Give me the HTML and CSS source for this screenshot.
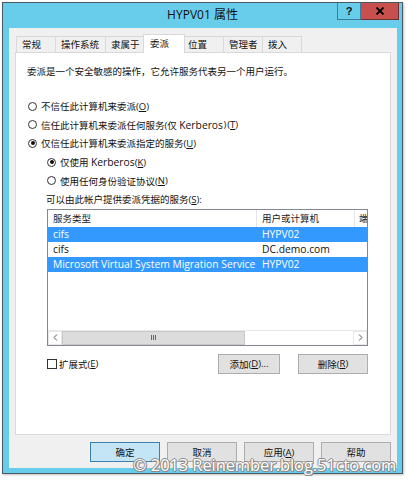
FILE: index.html
```html
<!DOCTYPE html>
<html lang="zh-CN">
<head>
<meta charset="utf-8">
<title>HYPV01 属性</title>
<link rel="stylesheet" href="styles.css">
</head>
<body>
<div class="window">
  <div class="titlebar">
    <div></div>
    <div class="title">HYPV01 属性</div>
    <div class="tbtns">
      <div class="tb help">?</div>
      <div class="tb close"><svg width="10" height="8" viewBox="0 0 10 8"><path d="M1.5 0.5 L8.5 7.5 M8.5 0.5 L1.5 7.5" stroke="#000" stroke-width="1.8" fill="none"/></svg></div>
    </div>
  </div>
  <div class="client">
    <div class="tabs">
      <div class="tab t1">常规</div>
      <div class="tab t2">操作系统</div>
      <div class="tab t3">隶属于</div>
      <div class="tab t4 active">委派</div>
      <div class="tab t5">位置</div>
      <div class="tab t6">管理者</div>
      <div class="tab t7">拨入</div>
    </div>
    <div class="panel">
      <div class="desc">委派是一个安全敏感的操作，它允许服务代表另一个用户运行。</div>
      <div class="options">
        <div class="opt"><span class="radio"></span>不信任此计算机来委派(<u>O</u>)</div>
        <div class="opt"><span class="radio"></span>信任此计算机来委派任何服务(仅 <span class="lat">Kerberos</span><span class="gap">)</span>(<u>T</u>)</div>
        <div class="opt"><span class="radio on"></span>仅信任此计算机来委派指定的服务(<u>U</u>)</div>
        <div class="opt sub"><span class="radio on"></span>仅使用 <span class="lat">Kerberos</span>(<u>K</u>)</div>
        <div class="opt sub"><span class="radio"></span>使用任何身份验证协议(<u>N</u>)</div>
        <div class="opt lbl">可以由此帐户提供委派凭据的服务(<u>S</u>):</div>
      </div>
      <div class="list">
        <div class="lrow head">
          <div class="c1">服务类型</div>
          <div class="c2">用户或计算机</div>
          <div class="c3">端口</div>
        </div>
        <div class="lrow data sel">
          <div class="c1">cifs</div>
          <div class="c2">HYPV02</div>
          <div class="c3"></div>
        </div>
        <div class="lrow data">
          <div class="c1">cifs</div>
          <div class="c2">DC.demo.com</div>
          <div class="c3"></div>
        </div>
        <div class="lrow data sel">
          <div class="c1">Microsoft Virtual System Migration Service</div>
          <div class="c2">HYPV02</div>
          <div class="c3"></div>
        </div>
        <div class="lspace"></div>
        <div class="hscroll">
          <div class="arrow">
            <svg width="5" height="7" viewBox="0 0 5 7"><path d="M4 0.5 L1 3.5 L4 6.5" stroke="#555" fill="none"/></svg>
          </div>
          <div class="thumb"><span class="grip"></span></div>
          <div class="track"></div>
          <div class="arrow">
            <svg width="5" height="7" viewBox="0 0 5 7"><path d="M1 0.5 L4 3.5 L1 6.5" stroke="#555" fill="none"/></svg>
          </div>
        </div>
      </div>
      <div class="actions">
        <label class="check"><span class="box"></span>扩展式(<u>E</u>)</label>
        <div class="btn add">添加(<u>D</u>)...</div>
        <div class="btn del">删除(<u>R</u>)</div>
      </div>
    </div>
    <div class="footer">
      <div class="btn fb default">确定</div>
      <div class="btn fb">取消</div>
      <div class="btn fb">应用(<u>A</u>)</div>
      <div class="btn fb">帮助</div>
    </div>
  </div>
</div>
<div class="watermark">© 2013 Reinember.blog.51cto.com</div>
</body>
</html>
```
FILE: styles.css
```css
html, body {
  margin: 0;
  padding: 0;
  background: #ffffff;
}
body {
  font-family: "Open Sans", "Noto Sans CJK SC", sans-serif;
  font-size: 9.5px;
  color: #111;
  width: 408px;
  height: 480px;
  overflow: hidden;
  position: relative;
}
u { text-decoration: underline; text-underline-offset: 1px; }
.lat { font-size: 10.3px; }
.gap { margin: 0 1px 0 0.5px; }

.window {
  margin: 2px 0 0 2px;
  width: 401px;
  height: 472px;
  box-sizing: border-box;
  border: 1px solid #4b5a60;
  background: #68cdeb;
  padding: 0 5px 5px 6px;
  display: flex;
  flex-direction: column;
  box-shadow: 1px 1px 2px rgba(0,0,0,0.25);
}

.titlebar {
  height: 25px;
  display: grid;
  grid-template-columns: 1fr auto 1fr;
  margin-left: -6px;
  margin-right: -5px;
}
.title {
  font-family: "Open Sans", "Noto Sans CJK SC", sans-serif;
  font-size: 12px;
  line-height: 24px;
  color: #111;
}
.tbtns {
  display: flex;
  justify-content: flex-end;
  align-items: flex-start;
  padding-right: 3px;
}
.tb {
  height: 17px;
  box-sizing: border-box;
  display: flex;
  align-items: center;
  justify-content: center;
}
.help {
  width: 24px;
  border: 1px solid #3a7f99;
  border-top: none;
  font-family: "Liberation Sans", sans-serif;
  font-weight: bold;
  font-size: 11px;
  color: #111;
}
.close {
  width: 38px;
  background: #c7504f;
  border: 1px solid #6e3030;
  border-top: none;
  border-left: none;
}

.client {
  flex: 1;
  background: #f0f0f0;
  padding: 6px 6px 0 6px;
  display: flex;
  flex-direction: column;
}

.tabs {
  display: flex;
  align-items: flex-end;
  height: 18px;
  padding-left: 1px;
}
.tab {
  height: 16px;
  box-sizing: border-box;
  border: 1px solid #d9d9d9;
  border-bottom: none;
  margin-left: -1px;
  padding-left: 5px;
  line-height: 15px;
  background: #f0f0f0;
  white-space: nowrap;
}
.tab:first-child { margin-left: 0; }
.t1 { width: 40px; }
.t2 { width: 51px; }
.t3 { width: 41px; }
.t4 { width: 38px; }
.t5 { width: 42px; }
.t6 { width: 40px; }
.t7 { width: 40px; }
.tab.active {
  width: 42px;
  height: 19px;
  margin: 0 -2px -1px -3px;
  background: #fff;
  position: relative;
  z-index: 1;
  line-height: 17px;
  padding-left: 6px;
}

.panel {
  height: 383px;
  box-sizing: border-box;
  border: 1px solid #d9d9d9;
  background: #fff;
  padding: 11px 0 0 11px;
  display: flex;
  flex-direction: column;
}
.desc {
  line-height: 15px;
  height: 15px;
}
.options {
  margin-top: 18px;
  display: flex;
  flex-direction: column;
}
.opt {
  height: 18.6px;
  display: flex;
  align-items: center;
  padding-left: 1px;
  white-space: pre;
}
.opt.sub { padding-left: 20px; }
.opt.lbl { padding-left: 19px; }
.radio {
  width: 9px;
  height: 9px;
  box-sizing: border-box;
  border: 1px solid #333;
  border-radius: 50%;
  background: #fff;
  margin-right: 4px;
  display: flex;
  align-items: center;
  justify-content: center;
  flex: none;
}
.radio.on::after {
  content: "";
  width: 4px;
  height: 4px;
  border-radius: 50%;
  background: #111;
}

.list {
  margin-left: 20px;
  width: 321px;
  height: 137px;
  box-sizing: border-box;
  border: 1px solid #828790;
  display: flex;
  flex-direction: column;
  overflow: hidden;
}
.lrow {
  display: flex;
  height: 15px;
  line-height: 15px;
  white-space: nowrap;
}
.lrow.data { font-size: 10.3px; }
.lrow.head {
  height: 17px;
  line-height: 17px;
  color: #222;
}
.lrow .c1 { width: 209px; padding-left: 5px; box-sizing: border-box; overflow: hidden; }
.lrow .c2 { width: 98px; padding-left: 5px; box-sizing: border-box; overflow: hidden; }
.lrow .c3 { flex: 1; padding-left: 4px; box-sizing: border-box; overflow: hidden; }
.lrow.head .c1, .lrow.head .c2 { border-right: 1px solid #e5e5e5; }
.lrow.sel { background: #3399ff; color: #fff; }
.lspace { flex: 1; }
.hscroll {
  height: 14px;
  display: flex;
  background: #e8e8e8;
  border-top: 1px solid #e8e8e8;
}
.hscroll .arrow {
  width: 14px;
  display: flex;
  align-items: center;
  justify-content: center;
  background: #fff;
  border: 1px solid #e8e8e8;
  box-sizing: border-box;
}
.thumb {
  width: 183px;
  background: #dcdcdc;
  border: 1px solid #c8c8c8;
  box-sizing: border-box;
  display: flex;
  align-items: center;
  justify-content: center;
}
.grip {
  width: 5px;
  height: 5px;
  background: repeating-linear-gradient(90deg, #666 0 1px, transparent 1px 2px);
}
.track { flex: 1; background: #fff; }

.actions {
  margin-top: 8px;
  display: flex;
  align-items: center;
  height: 20px;
  padding-left: 20px;
  padding-right: 22px;
}
.check {
  display: flex;
  align-items: center;
  flex: 1;
}
.box {
  width: 10px;
  height: 10px;
  box-sizing: border-box;
  border: 1px solid #333;
  background: #fff;
  margin-right: 2px;
}
.btn {
  height: 20px;
  box-sizing: border-box;
  border: 1px solid #adadad;
  background: #e1e1e1;
  display: flex;
  align-items: center;
  justify-content: center;
  white-space: nowrap;
}
.add { width: 62px; margin-right: 18px; }
.del { width: 70px; }

.footer {
  display: flex;
  justify-content: flex-end;
  gap: 7px;
  margin-top: 7px;
}
.fb { width: 70px; }
.fb.default {
  background: #c4e5f6;
  border-color: #3c7fb1;
}

.watermark {
  position: absolute;
  left: 133px;
  top: 454px;
  font-family: "Open Sans", sans-serif;
  font-size: 16.5px;
  line-height: 22px;
  color: #fff;
  letter-spacing: -0.1px;
  text-shadow: -1px 0 #8a8a8a, 1px 0 #8a8a8a, 0 -1px #8a8a8a, 0 1px #8a8a8a, 1px 1px #8a8a8a;
  white-space: nowrap;
}
```
